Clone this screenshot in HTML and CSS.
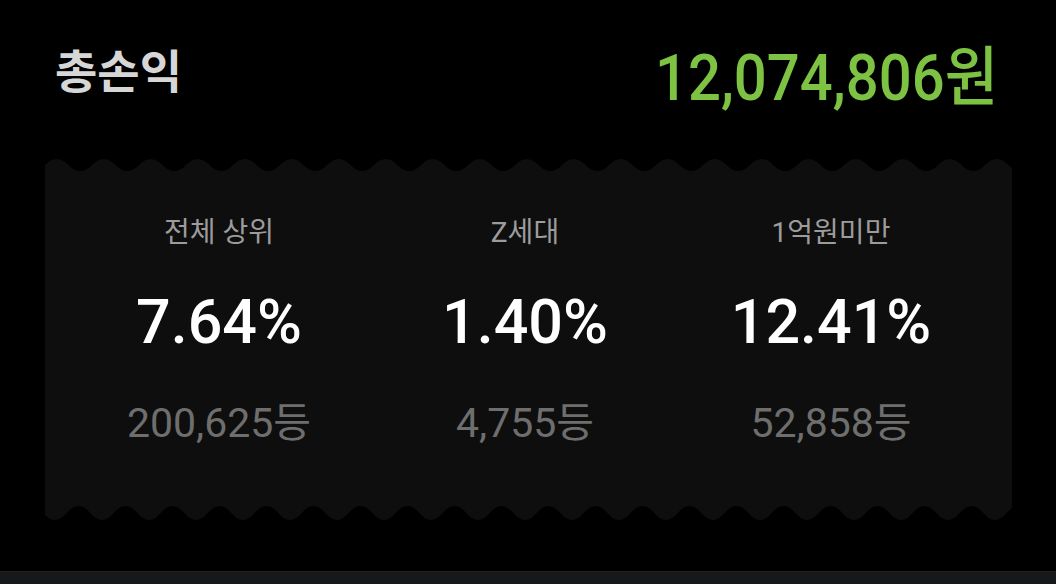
FILE: index.html
```html
<!DOCTYPE html>
<html lang="ko">
<head>
<meta charset="utf-8">
<title>총손익</title>
<link rel="stylesheet" href="styles.css">
</head>
<body>
<div class="header">
  <div class="title">총손익</div>
  <div class="total">12,074,806원</div>
</div>
<div class="card">
  <svg class="wave wave-top" viewBox="0 0 967 14" preserveAspectRatio="none">
    <path d="M0,14 L0,7 q11.75,-12 23.5,0 t23.5,0 t23.5,0 t23.5,0 t23.5,0 t23.5,0 t23.5,0 t23.5,0 t23.5,0 t23.5,0 t23.5,0 t23.5,0 t23.5,0 t23.5,0 t23.5,0 t23.5,0 t23.5,0 t23.5,0 t23.5,0 t23.5,0 t23.5,0 t23.5,0 t23.5,0 t23.5,0 t23.5,0 t23.5,0 t23.5,0 t23.5,0 t23.5,0 t23.5,0 t23.5,0 t23.5,0 t23.5,0 t23.5,0 t23.5,0 t23.5,0 t23.5,0 t23.5,0 t23.5,0 t23.5,0 t23.5,0 t23.5,0 L987,14 Z"/>
  </svg>
  <div class="card-body">
    <div class="stat">
      <div class="label">전체 상위</div>
      <div class="pct">7.64%</div>
      <div class="rank">200,625등</div>
    </div>
    <div class="stat">
      <div class="label">Z세대</div>
      <div class="pct">1.40%</div>
      <div class="rank">4,755등</div>
    </div>
    <div class="stat">
      <div class="label">1억원미만</div>
      <div class="pct">12.41%</div>
      <div class="rank">52,858등</div>
    </div>
  </div>
  <svg class="wave wave-bottom" viewBox="0 0 967 16" preserveAspectRatio="none">
    <path d="M-1.75,0 L-1.75,8 q11.75,14 23.5,0 t23.5,0 t23.5,0 t23.5,0 t23.5,0 t23.5,0 t23.5,0 t23.5,0 t23.5,0 t23.5,0 t23.5,0 t23.5,0 t23.5,0 t23.5,0 t23.5,0 t23.5,0 t23.5,0 t23.5,0 t23.5,0 t23.5,0 t23.5,0 t23.5,0 t23.5,0 t23.5,0 t23.5,0 t23.5,0 t23.5,0 t23.5,0 t23.5,0 t23.5,0 t23.5,0 t23.5,0 t23.5,0 t23.5,0 t23.5,0 t23.5,0 t23.5,0 t23.5,0 t23.5,0 t23.5,0 t23.5,0 t23.5,0 L985.25,0 Z"/>
  </svg>
</div>
<div class="strip"></div>
</body>
</html>
```

FILE: styles.css
```css
html, body {
  margin: 0;
  padding: 0;
}
body {
  background: #000;
  width: 1056px;
  height: 584px;
  overflow: hidden;
  font-family: Roboto, "Noto Sans CJK KR", sans-serif;
}
.header {
  display: flex;
  justify-content: space-between;
  align-items: flex-start;
  height: 158px;
  padding: 0 58px 0 55px;
  box-sizing: border-box;
}
.title {
  margin-top: 45px;
  font-family: "Noto Sans CJK KR", sans-serif;
  font-size: 46px;
  line-height: 46px;
  font-weight: 700;
  color: #d6d6d6;
}
.total {
  margin-top: 51px;
  font-size: 58px;
  line-height: 58px;
  font-weight: 500;
  color: #7dc242;
  transform: scaleY(1.12);
  transform-origin: 50% 85%;
}
.card {
  margin-left: 45px;
  width: 967px;
}
.wave {
  display: block;
  width: 967px;
  fill: #0e0e0e;
}
.wave-top {
  height: 14px;
}
.wave-bottom {
  height: 16px;
}
.card-body {
  background: #0e0e0e;
  height: 333px;
  padding: 0 28px 0 21px;
  box-sizing: border-box;
  display: grid;
  grid-template-columns: repeat(3, 1fr);
}
.stat {
  display: flex;
  flex-direction: column;
  align-items: center;
  padding-top: 41px;
}
.label {
  font-size: 28px;
  line-height: 40px;
  color: #9c9c9c;
}
.pct {
  margin-top: 34px;
  font-size: 61px;
  line-height: 70px;
  font-weight: 500;
  color: #fff;
}
.rank {
  margin-top: 40px;
  font-size: 41px;
  line-height: 52px;
  color: #6e6e6e;
}
.strip {
  margin-top: 50px;
  height: 14px;
  background: #17181a;
  border-top: 1px solid #202123;
}
```
